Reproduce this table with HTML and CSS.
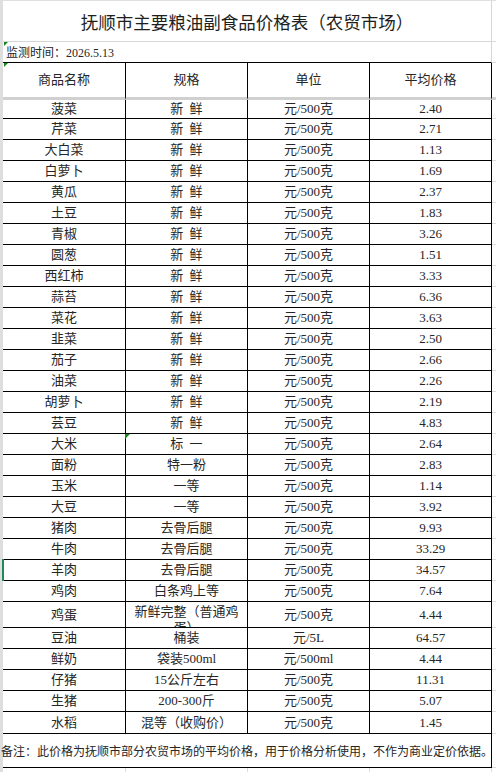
FILE: index.html
```html
<!DOCTYPE html>
<html lang="zh-CN">
<head>
<meta charset="utf-8">
<title>抚顺市主要粮油副食品价格表（农贸市场）</title>
<link rel="stylesheet" href="styles.css">
</head>
<body>
<div class="page">
  <div class="gutter"></div>
  <div class="main">
    <div class="topline"></div>
    <div class="row r-title">
      <div class="span title">抚顺市主要粮油副食品价格表（农贸市场）</div>
      <div class="pad"></div>
    </div>
    <div class="row r-date">
      <div class="span date mark">监测时间：2026.5.13</div>
      <div class="pad"></div>
    </div>
    <div class="row r-head">
      <div class="cell mark">商品名称</div>
      <div class="cell">规格</div>
      <div class="cell">单位</div>
      <div class="cell">平均价格</div>
      <div class="pad"></div>
    </div>
    <div class="row r-first"><div class="cell">菠菜</div><div class="cell spec">新 鲜</div><div class="cell">元/500克</div><div class="cell">2.40</div><div class="pad"></div></div>
    <div class="row"><div class="cell">芹菜</div><div class="cell spec">新 鲜</div><div class="cell">元/500克</div><div class="cell">2.71</div><div class="pad"></div></div>
    <div class="row"><div class="cell">大白菜</div><div class="cell spec">新 鲜</div><div class="cell">元/500克</div><div class="cell">1.13</div><div class="pad"></div></div>
    <div class="row"><div class="cell">白萝卜</div><div class="cell spec">新 鲜</div><div class="cell">元/500克</div><div class="cell">1.69</div><div class="pad"></div></div>
    <div class="row"><div class="cell">黄瓜</div><div class="cell spec">新 鲜</div><div class="cell">元/500克</div><div class="cell">2.37</div><div class="pad"></div></div>
    <div class="row"><div class="cell">土豆</div><div class="cell spec">新 鲜</div><div class="cell">元/500克</div><div class="cell">1.83</div><div class="pad"></div></div>
    <div class="row"><div class="cell">青椒</div><div class="cell spec">新 鲜</div><div class="cell">元/500克</div><div class="cell">3.26</div><div class="pad"></div></div>
    <div class="row"><div class="cell">圆葱</div><div class="cell spec">新 鲜</div><div class="cell">元/500克</div><div class="cell">1.51</div><div class="pad"></div></div>
    <div class="row"><div class="cell">西红柿</div><div class="cell spec">新 鲜</div><div class="cell">元/500克</div><div class="cell">3.33</div><div class="pad"></div></div>
    <div class="row"><div class="cell">蒜苔</div><div class="cell spec">新 鲜</div><div class="cell">元/500克</div><div class="cell">6.36</div><div class="pad"></div></div>
    <div class="row"><div class="cell">菜花</div><div class="cell spec">新 鲜</div><div class="cell">元/500克</div><div class="cell">3.63</div><div class="pad"></div></div>
    <div class="row"><div class="cell">韭菜</div><div class="cell spec">新 鲜</div><div class="cell">元/500克</div><div class="cell">2.50</div><div class="pad"></div></div>
    <div class="row"><div class="cell">茄子</div><div class="cell spec">新 鲜</div><div class="cell">元/500克</div><div class="cell">2.66</div><div class="pad"></div></div>
    <div class="row"><div class="cell">油菜</div><div class="cell spec">新 鲜</div><div class="cell">元/500克</div><div class="cell">2.26</div><div class="pad"></div></div>
    <div class="row"><div class="cell">胡萝卜</div><div class="cell spec">新 鲜</div><div class="cell">元/500克</div><div class="cell">2.19</div><div class="pad"></div></div>
    <div class="row"><div class="cell">芸豆</div><div class="cell spec">新 鲜</div><div class="cell">元/500克</div><div class="cell">4.83</div><div class="pad"></div></div>
    <div class="row"><div class="cell">大米</div><div class="cell spec mark mark-edge">标 一</div><div class="cell">元/500克</div><div class="cell">2.64</div><div class="pad"></div></div>
    <div class="row"><div class="cell">面粉</div><div class="cell">特一粉</div><div class="cell">元/500克</div><div class="cell">2.83</div><div class="pad"></div></div>
    <div class="row"><div class="cell">玉米</div><div class="cell">一等</div><div class="cell">元/500克</div><div class="cell">1.14</div><div class="pad"></div></div>
    <div class="row"><div class="cell">大豆</div><div class="cell">一等</div><div class="cell">元/500克</div><div class="cell">3.92</div><div class="pad"></div></div>
    <div class="row"><div class="cell">猪肉</div><div class="cell">去骨后腿</div><div class="cell">元/500克</div><div class="cell">9.93</div><div class="pad"></div></div>
    <div class="row"><div class="cell">牛肉</div><div class="cell">去骨后腿</div><div class="cell">元/500克</div><div class="cell">33.29</div><div class="pad"></div></div>
    <div class="row"><div class="cell sel">羊肉</div><div class="cell">去骨后腿</div><div class="cell">元/500克</div><div class="cell">34.57</div><div class="pad"></div></div>
    <div class="row"><div class="cell">鸡肉</div><div class="cell">白条鸡上等</div><div class="cell">元/500克</div><div class="cell">7.64</div><div class="pad"></div></div>
    <div class="row r-egg"><div class="cell">鸡蛋</div><div class="cell wrap">新鲜完整（普通鸡蛋）</div><div class="cell">元/500克</div><div class="cell">4.44</div><div class="pad"></div></div>
    <div class="row"><div class="cell">豆油</div><div class="cell">桶装</div><div class="cell">元/5L</div><div class="cell">64.57</div><div class="pad"></div></div>
    <div class="row"><div class="cell">鲜奶</div><div class="cell">袋装500ml</div><div class="cell">元/500ml</div><div class="cell">4.44</div><div class="pad"></div></div>
    <div class="row"><div class="cell">仔猪</div><div class="cell">15公斤左右</div><div class="cell">元/500克</div><div class="cell">11.31</div><div class="pad"></div></div>
    <div class="row"><div class="cell">生猪</div><div class="cell">200-300斤</div><div class="cell">元/500克</div><div class="cell">5.07</div><div class="pad"></div></div>
    <div class="row r-last"><div class="cell">水稻</div><div class="cell">混等（收购价）</div><div class="cell">元/500克</div><div class="cell">1.45</div><div class="pad"></div></div>
    <div class="row r-note">
      <div class="span note">备注：此价格为抚顺市部分农贸市场的平均价格，用于价格分析使用，不作为商业定价依据。</div>
      <div class="pad"></div>
    </div>
    <div class="row r-tail">
      <div class="tcell"></div><div class="tcell"></div><div class="tcell"></div><div class="tcell"></div><div></div>
    </div>
  </div>
</div>
</body>
</html>
```

FILE: styles.css
```css
html, body {
  margin: 0;
  padding: 0;
  background: #ffffff;
}

body {
  font-family: "Liberation Serif", "Noto Sans CJK SC", serif;
  color: #262626;
  font-size: 13px;
}

.page {
  display: flex;
  width: 496px;
  height: 772px;
  overflow: hidden;
}

.gutter {
  flex: none;
  width: 3px;
  background: #dedede;
}

.main {
  flex: none;
  width: 493px;
}

.topline {
  height: 1px;
  background: #e0e0e0;
}

.row {
  display: grid;
  grid-template-columns: 123px 122px 122px 122px 4px;
  height: 21px;
}

.row > div {
  box-sizing: border-box;
  min-width: 0;
}

.cell {
  position: relative;
  display: flex;
  align-items: center;
  justify-content: center;
  border-right: 1px solid #000;
  border-bottom: 1px solid #000;
  line-height: 16px;
  white-space: nowrap;
}

.pad {
  border-bottom: 1px solid #dcdcdc;
}

.span {
  grid-column: 1 / 5;
  position: relative;
  display: flex;
  align-items: center;
}

.r-title {
  height: 41px;
}

.title {
  justify-content: center;
  font-size: 17.5px;
  color: #1e1e1e;
  border-right: 1px solid #d6d6d6;
  border-bottom: 1px solid #d6d6d6;
}

.r-date {
  height: 21px;
}

.date {
  font-size: 12px;
  padding-left: 3px;
  border-right: 1px solid #d6d6d6;
  border-bottom: 1px solid #000;
}

.r-head {
  height: 37px;
}

.r-head > div {
  border-bottom: 3px solid #d0d0d0;
}

.r-first {
  height: 19px;
}

.r-egg {
  height: 26px;
}

.r-last {
  height: 22px;
}

.spec {
  word-spacing: 3px;
}

.wrap {
  align-items: flex-start;
  white-space: normal;
  text-align: center;
  overflow: hidden;
  padding: 2px 4px 0;
}

.r-note {
  height: 34px;
}

.note {
  justify-content: center;
  font-size: 12px;
  white-space: nowrap;
  border-right: 1px solid #000;
  border-bottom: 1px solid #000;
}

.r-tail {
  height: 4px;
}

.tcell {
  border-right: 1px solid #dcdcdc;
}

/* green cell markers */
.mark::before {
  content: "";
  position: absolute;
  top: 0;
  left: 1px;
  width: 0;
  height: 0;
  border-top: 4px solid #13891a;
  border-right: 4px solid transparent;
}

.mark-edge::before {
  left: -1px;
  border-top-width: 5px;
  border-right-width: 5px;
}

.sel::before {
  content: "";
  position: absolute;
  left: -1px;
  top: -1px;
  width: 2px;
  height: 22px;
  background: #218a57;
}
```
